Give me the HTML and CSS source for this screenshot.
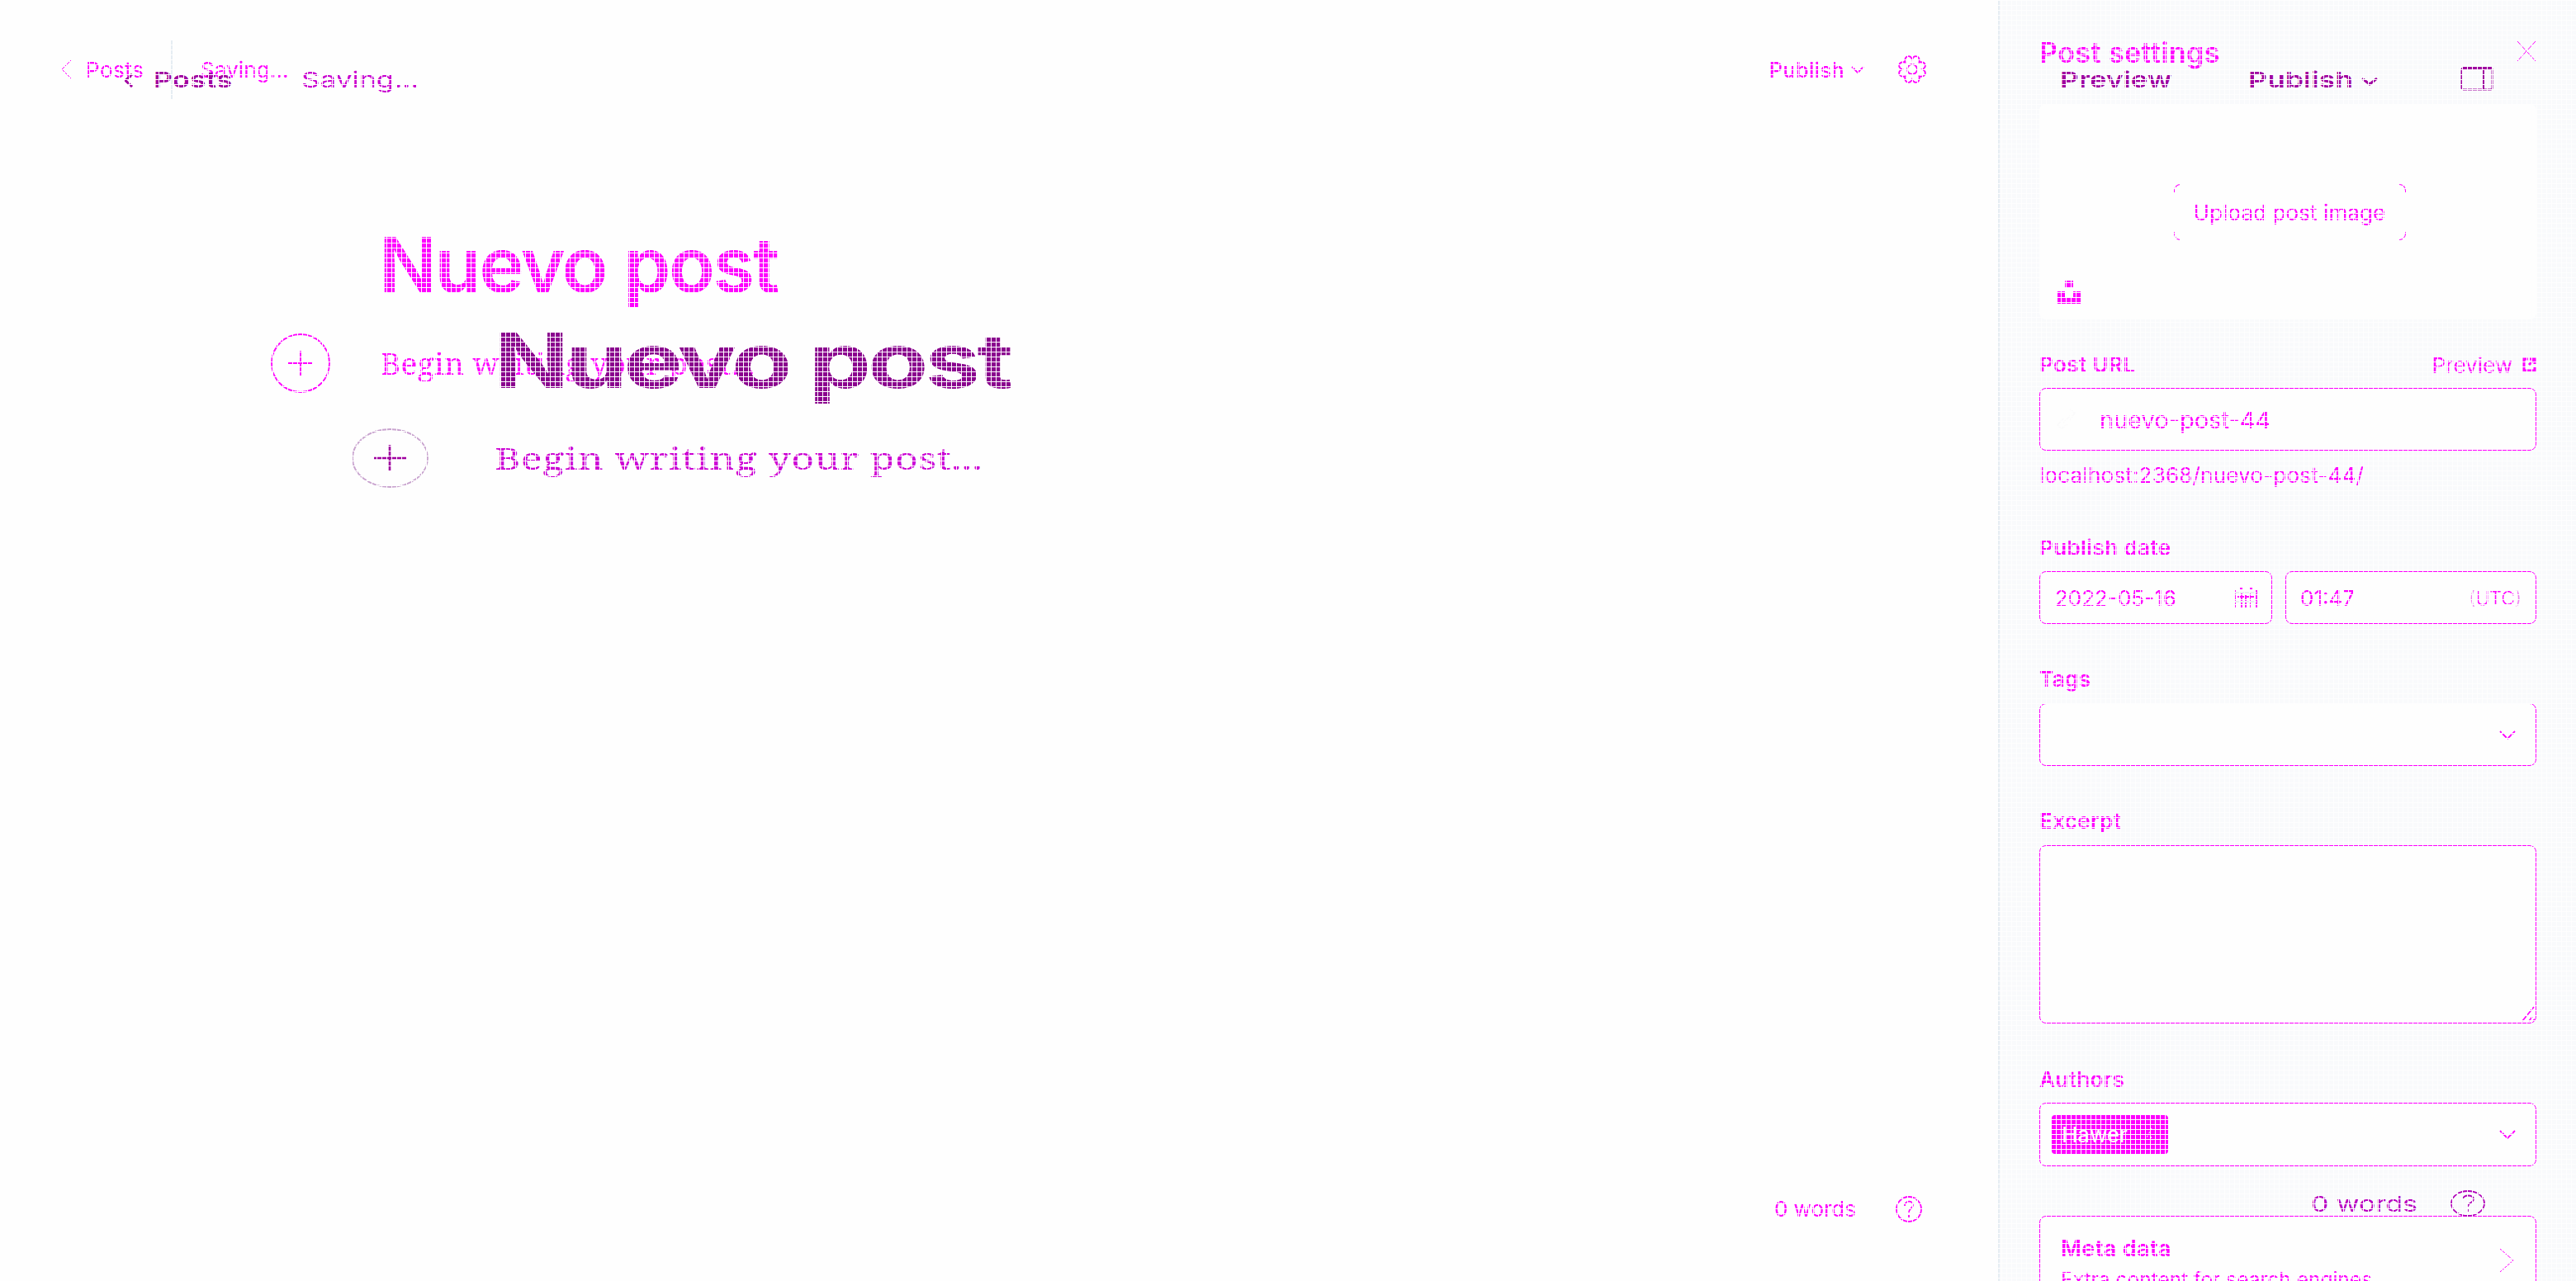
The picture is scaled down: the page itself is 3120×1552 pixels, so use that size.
FILE: index.html
```
<!DOCTYPE html>
<html lang="en">
<head>
<meta charset="utf-8">
<title>Nuevo post</title>
<link rel="stylesheet" href="styles.css">
</head>
<body>
<div class="app">
  <main class="editor">
    <header class="bar">
      <svg class="back" width="14" height="24" viewBox="0 0 14 24"><path d="M12 1 1 12l11 11"/></svg>
      <span class="t posts">Posts</span>
      <span class="divider"></span>
      <span class="t saving">Saving...</span>
      <span class="t publish">Publish</span>
      <svg class="chev" width="16" height="9" viewBox="0 0 16 9"><path d="M1 1l7 7 7-7"/></svg>
      <svg class="gear" width="34" height="34" viewBox="0 0 34 34"><path d="M29 17Q34 19 32.500 23 31 26.500 25.500 25.500 26.500 31 23 32.500 19 34 17 29 15 34 11 32.500 7.500 31 8.500 25.500 3 26.500 1.500 23 0 19 5 17 0 15 1.500 11 3 7.500 8.500 8.500 7.500 3 11 1.500 15 0 17 5 19 0 23 1.500 26.500 3 25.500 8.500 31 7.500 32.500 11 34 15 29 17z"/><circle cx="17" cy="17" r="6"/></svg>
    </header>
    <h1 class="t title">Nuevo post</h1>
    <div class="begin">
      <svg width="72" height="72" viewBox="0 0 72 72"><circle cx="36" cy="36" r="35"/><path d="M36 21v30M21 36h30"/></svg>
      <span class="t prompt">Begin writing your post...</span>
    </div>
    <footer class="foot">
      <span class="t words">0 words</span>
      <svg width="34" height="34" viewBox="0 0 34 34"><circle cx="17" cy="17" r="15"/><path d="M12 13c0-7 10-7 10-1 0 4-5 4-5 9M17 24v3"/></svg>
    </footer>
  </main>
  <aside class="panel">
    <div class="phead"><h2 class="t ptitle">Post settings</h2><svg width="24" height="26" viewBox="0 0 24 26"><path d="M1 1l22 24M23 1 1 25"/></svg></div>
    <div class="upload">
      <div class="ubtn"><span class="t utext">Upload post image</span><i class="corner tl"></i><i class="corner tr"></i><i class="corner bl"></i><i class="corner br"></i></div>
      <svg class="unsplash" width="28" height="28" viewBox="0 0 28 28"><path d="M9 0h10v8H9zM0 13h9v8h10v-8h9v15H0z"/></svg>
    </div>
    <div class="row l1"><span class="t lab">Post URL</span><span class="pv"><span class="t">Preview</span><svg width="17" height="18" viewBox="0 0 17 18"><path d="M7 2H2v14h13v-5M9 2h6v6M15 2 8 9"/></svg></span></div>
    <div class="field url"><svg width="24" height="26" viewBox="0 0 24 26"><path d="M8 17 16 9M16 1l6 4-6 9M8 12l-7 8 5 4 7-5"/></svg><span class="t slug">nuevo-post-44</span></div>
    <div class="t link">localhost:2368/nuevo-post-44/</div>
    <div class="t lab l2">Publish date</div>
    <div class="dates">
      <div class="field date"><span class="t">2022-05-16</span><svg width="28" height="26" viewBox="0 0 28 26"><path d="M1 4v21M27 4v21M4 12h20M9 7v18M14 10v15M19 7v18M7 2h3M19 2h3"/><path class="faint" d="M1 7h26M1 18h26"/></svg></div>
      <div class="field time"><span class="t">01:47</span><span class="t utc"><span class="paren">(</span>UTC<span class="paren">)</span></span></div>
    </div>
    <div class="t lab l3">Tags</div>
    <div class="field tags"><svg width="20" height="11" viewBox="0 0 20 11"><path d="M1 1l9 9 9-9"/></svg></div>
    <div class="t lab l4">Excerpt</div>
    <div class="field excerpt"><svg width="17" height="20" viewBox="0 0 17 20"><path d="M1 18 15 1M9 18l4-5M14 18l2-2" /></svg></div>
    <div class="t lab l5">Authors</div>
    <div class="field authors"><span class="token"><span class="t">Hawer</span><svg width="10" height="18" viewBox="0 0 10 18"><path d="M1 16 9 1M8 11l2 5"/></svg></span><svg width="20" height="11" viewBox="0 0 20 11"><path d="M1 1l9 9 9-9"/></svg></div>
    <div class="field meta"><div><div class="t mtitle">Meta data</div><div class="t mdesc">Extra content for search engines</div></div><svg width="18" height="30" viewBox="0 0 18 30"><path d="M1 1l16 14L1 29"/></svg></div>
  </aside>
</div>
<div class="ghost">
  <svg class="g gback" width="12" height="17" viewBox="0 0 12 17"><path d="M10 1 2 8.500l8 7.500"/></svg>
  <span class="g t gposts">Posts</span>
  <span class="g t gsaving">Saving...</span>
  <span class="g t gpreview">Preview</span>
  <span class="g t gpublish">Publish</span>
  <svg class="g gchev" width="20" height="10" viewBox="0 0 20 10"><path d="M1 1l9 7 9-7"/></svg>
  <svg class="g gside" width="40" height="29" viewBox="0 0 40 29"><rect x="1.500" y="1.500" width="37" height="26" rx="2"/><path class="thick" d="M2 1.500h36M27.500 1v26"/></svg>
  <span class="g t gtitle">Nuevo post</span>
  <svg class="g gplus" width="94" height="72" viewBox="0 0 94 72"><ellipse cx="46.500" cy="36" rx="45.500" ry="35"/><path d="M46 20v31M27 36h39"/></svg>
  <span class="g t gprompt">Begin writing your post...</span>
  <span class="g t gwords">0 words</span>
  <svg class="g ghelp" width="44" height="34" viewBox="0 0 44 34"><ellipse cx="22" cy="17" rx="20" ry="15"/><path d="M16 12c0-6 13-6 13 0 0 4-7 4-7 9M22 24v3"/></svg>
</div>
<div class="mesh"></div>
</body>
</html>
```
FILE: styles.css
```
* { box-sizing: border-box; margin: 0; padding: 0; }
body { width: 3120px; height: 1552px; overflow: hidden; position: relative; background: #fefefe; color: #f0f; font-family: Inter, sans-serif; }
svg { display: block; fill: none; stroke: currentColor; stroke-width: 1.8; flex: none; }
.t { white-space: nowrap; line-height: 40px; }
.app { display: flex; height: 1552px; }
.editor { width: 2420px; display: flex; flex-direction: column; }
.bar { height: 168px; padding: 0 87px 0 74px; display: flex; align-items: center; font-size: 26px; }
.bar .t { padding-top: 2px; }
.back { stroke-width: 1; }
.posts { margin-left: 16px; width: 72px; letter-spacing: .5px; }
.divider { width: 2px; height: 72px; background: #e6edf3; margin-left: 31px; }
.saving { margin-left: 34px; letter-spacing: .1px; }
.publish { margin-left: auto; font-weight: 500; font-size: 25px; letter-spacing: .5px; }
.chev { margin-left: 8px; }
.gear { margin-left: 41px; stroke-width: 1.8; }
.title { font-size: 92px; font-weight: 600; letter-spacing: -2.4px; line-height: 112px; margin: 97px 0 0 459px; }
.begin { display: flex; align-items: center; margin: 27px 0 0 328px; }
.prompt { margin: -1px 0 0 61px; font: 37px/60px "Noto Serif", "Liberation Serif", serif; letter-spacing: .4px; }
.foot { margin-top: auto; padding: 0 91px 67px 0; display: flex; justify-content: flex-end; align-items: center; font-size: 26px; }
.words { margin-right: 47px; }
.panel { width: 700px; height: 1552px; overflow: hidden; background: #f9fafc; border-left: 2px solid #e6edf3; padding: 44px 48px 0 48px; display: flex; flex-direction: column; }
.panel > * { flex: none; }
.phead { height: 82px; display: flex; justify-content: space-between; align-items: flex-start; }
.phead svg { margin-top: 5px; stroke-width: 1; }
.ptitle { font-size: 34px; font-weight: 600; letter-spacing: .45px; }
.upload { height: 261px; background: #fefefe; border-radius: 8px; padding: 97px 0 0 163px; position: relative; }
.ubtn { position: relative; width: 281px; height: 68px; display: flex; align-items: center; justify-content: center; font-size: 26px; }
.utext { margin: 2px 1px 0 0; letter-spacing: .1px; }
.corner { position: absolute; width: 8px; height: 10px; border: 0 solid #f0f; }
.tl { left: 0; top: 0; border-width: 1px 0 0 1px; border-radius: 8px 0 0; }
.tr { right: 0; top: 0; border-width: 1px 1px 0 0; border-radius: 0 8px 0 0; }
.bl { left: 0; bottom: 0; border-width: 0 0 1px 1px; border-radius: 0 0 0 8px; }
.br { right: 0; bottom: 0; border-width: 0 1px 1px 0; border-radius: 0 0 8px; }
.unsplash { position: absolute; left: 22px; bottom: 19px; fill: #f0f; stroke: none; }
.row { display: flex; justify-content: space-between; align-items: center; }
.lab { font-weight: 600; font-size: 26px; letter-spacing: .4px; }
.l1 { margin-top: 35px; height: 40px; }
.pv { display: flex; align-items: center; gap: 12px; font-size: 26px; }
.pv .t { padding-top: 2px; }
.pv svg { stroke-width: 3; }
.field { background: #fefefe; border: 1px solid #f0f; border-radius: 8px; display: flex; align-items: center; justify-content: space-between; }
.url { height: 76px; margin-top: 8px; padding-left: 20px; justify-content: flex-start; font-size: 29px; }
.url svg { color: #fafafb; margin-right: 28px; }
.slug { margin-top: 2px; }
.link { font-size: 26px; margin-top: 10px; letter-spacing: .2px; }
.l2 { margin-top: 48px; }
.dates { display: flex; gap: 16px; margin-top: 8px; font-size: 26px; }
.dates .field { height: 64px; }
.date { width: 282px; padding: 0 17px 0 18px; }
.time { width: 304px; padding: 0 17px; }
.dates .t { padding-top: 1px; }
.faint { stroke: #eceff2; }
.utc { font-weight: 300; font-size: 23px; }
.paren { color: #f07cf0; }
.l3 { margin-top: 47px; }
.tags { height: 76px; margin-top: 9px; padding-right: 24px; justify-content: flex-end; }
.l4 { margin-top: 47px; }
.excerpt { height: 216px; margin-top: 9px; align-items: flex-end; justify-content: flex-end; }
.l5 { margin-top: 48px; }
.authors { height: 77px; margin-top: 8px; padding: 0 24px 0 14px; }
.token { width: 141px; height: 47px; background: #f0f; border-radius: 4px; color: #fefefe; display: flex; align-items: center; padding-left: 12px; gap: 20px; font-size: 26px; }
.token svg { stroke-width: 1; stroke-dasharray: 2 3; }
.meta { height: 146px; margin-top: 60px; padding: 19px 26px 19px 25px; align-items: flex-start; }
.meta svg { margin-top: 19px; stroke-width: 1; }
.mtitle { font-weight: 600; font-size: 27px; letter-spacing: .4px; }
.mdesc { font-size: 24.5px; margin-top: -3px; }
.ghost { position: absolute; inset: 0; color: #a000a0; }
.g { position: absolute; transform-origin: 0 50%; }
.ghost .t { font-size: 26px; }
.gback { left: 150px; top: 89px; stroke-width: 3; }
.ghost .gposts { left: 186px; top: 77px; font-weight: 600; transform: scaleX(1.36); }
.ghost .gsaving { left: 365px; top: 77px; color: #c800d0; transform: scaleX(1.35); }
.ghost .gpreview { left: 2495px; top: 77px; font-weight: 600; transform: scaleX(1.35); }
.ghost .gpublish { left: 2723px; top: 77px; font-weight: 600; transform: scaleX(1.37); }
.gchev { left: 2860px; top: 94px; stroke-width: 3; }
.gside { left: 2980px; top: 81px; stroke-width: 2; }
.gside .thick { stroke-width: 3; }
.ghost .gtitle { left: 598px; top: 381px; font-size: 92px; font-weight: 700; line-height: 112px; color: #8a008e; letter-spacing: -3.1px; transform: scaleX(1.3); }
.gplus { left: 426px; top: 519px; }
.gplus ellipse { stroke: #c9a4cf; }
.gplus path { stroke-width: 2.6; }
.ghost .gprompt { left: 599px; top: 525px; font: 37px/60px "Noto Serif", "Liberation Serif", serif; color: #cc00d4; letter-spacing: .45px; transform: scaleX(1.3); }
.ghost .gwords { left: 2799px; top: 1439px; color: #b800c0; transform: scaleX(1.3); }
.ghelp { left: 2967px; top: 1441px; color: #b000b8; }
.mesh { position: absolute; inset: 0; pointer-events: none; background: repeating-linear-gradient(90deg, #fefefe 0 1px, transparent 1px 6px), repeating-linear-gradient(#fefefe 0 1px, transparent 1px 6px); }
```
